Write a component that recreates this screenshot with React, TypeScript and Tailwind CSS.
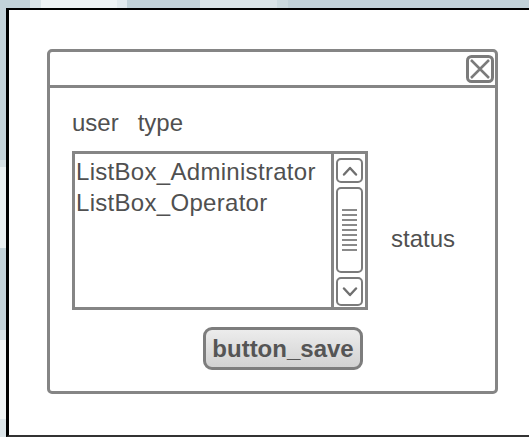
import React from "react"

const font = { fontFamily: '"Liberation Sans", Arial, sans-serif' }

function CloseIcon() {
  return (
    <svg width="28" height="28" viewBox="0 0 28 28" fill="none">
      <rect x="1.5" y="1.5" width="25" height="25" rx="4" stroke="#7b7b7b" strokeWidth="3" />
      <path d="M5 5 L23 23 M23 5 L5 23" stroke="#7b7b7b" strokeWidth="2.5" />
    </svg>
  )
}

function Chevron({ up }: { up?: boolean }) {
  return (
    <svg width="16" height="10" viewBox="0 0 16 10" fill="none">
      <path
        d={up ? "M2 8.5 L8 2 L14 8.5" : "M2 1.5 L8 8 L14 1.5"}
        stroke="#6f6f6f"
        strokeWidth="2.4"
        strokeLinejoin="round"
        strokeLinecap="round"
      />
    </svg>
  )
}

function ScrollBar() {
  return (
    <div className="flex w-[34px] flex-col gap-[4px] border-l-[3px] border-[#858585] px-[2px] pt-[4px] pb-[1px]">
      <div className="flex h-[25px] items-center justify-center rounded-[5px] border-[2.5px] border-[#7b7b7b]">
        <Chevron up />
      </div>
      <div className="flex flex-1 flex-col items-center justify-center gap-[3px] rounded-[5px] border-[2.5px] border-[#7b7b7b]">
        {[0, 1, 2, 3, 4, 5, 6, 7, 8].map((i) => (
          <div key={i} className="h-[2px] w-[15px] bg-[#8a8a8a]" />
        ))}
      </div>
      <div className="flex h-[29px] items-center justify-center rounded-[5px] border-[2.5px] border-[#7b7b7b]">
        <Chevron />
      </div>
    </div>
  )
}

export default function App() {
  return (
    <div className="flex h-[437px] w-[529px] flex-col overflow-hidden bg-[#c4d3da]" style={font}>
      {/* desktop strip above the frame */}
      <div className="flex h-[8px] shrink-0">
        <div className="w-[30px] bg-[#c2d2d9]" />
        <div className="w-[11px] bg-[#dae4e8]" />
        <div className="w-[76px] bg-[#eef3f5]" />
        <div className="w-[10px] bg-[#e2eaee]" />
        <div className="w-[73px] bg-[#c2d2d9]" />
        <div className="w-[77px] bg-[#d9e3e7]" />
        <div className="w-[11px] bg-[#ccdadf]" />
        <div className="flex-1 bg-[#c2d2d9]" />
      </div>

      <div className="flex flex-1">
        <div className="flex w-[6px] shrink-0 flex-col">
          <div className="h-[152px] bg-[#c4d3da]" />
          <div className="h-[7px] bg-[#d5dfe4]" />
          <div className="h-[81px] bg-[#eaf0f2]" />
          <div className="h-[82px] bg-[#c4d3da]" />
          <div className="h-[10px] bg-[#d8e2e6]" />
          <div className="h-[79px] bg-[#f0f4f5]" />
          <div className="flex-1 bg-[#dce5e9]" />
        </div>

        {/* outer frame */}
        <div className="flex-1 border-t-[2px] border-b-[2px] border-l-[3px] border-t-black border-b-[#333] border-l-black bg-white pt-[39px] pl-[38px]">
          <div className="flex h-[345px] w-[451px] flex-col rounded-[5px] border-[3px] border-[#858585]">
            {/* title bar */}
            <div className="flex h-[36px] items-center justify-end border-b-[3px] border-[#858585] pr-[1px]">
              <CloseIcon />
            </div>

            {/* dialog body */}
            <div className="flex flex-1 flex-col pt-[21px] pl-[22px] text-[#505050]">
              <div className="text-[24px] leading-[28px]">
                user<span className="ml-[19px]">type</span>
              </div>

              <div className="mt-[14px] flex items-start">
                <div className="flex h-[159px] w-[296px] border-[3px] border-[#858585]">
                  <div className="flex-1 pt-[2px] pl-[1px] text-[24px] leading-[31px] tracking-[0.3px]">
                    <div>ListBox_Administrator</div>
                    <div>ListBox_Operator</div>
                  </div>
                  <ScrollBar />
                </div>
                <div className="mt-[74px] ml-[23px] text-[24px] leading-[28px]">status</div>
              </div>

              <button className="mt-[17px] ml-[131px] flex h-[43px] w-[160px] items-center justify-center rounded-[9px] border-[3px] border-[#7d7d7d] bg-gradient-to-b from-[#ececec] to-[#d2d2d2] text-[24px] font-bold text-[#555]">
                button_save
              </button>
            </div>
          </div>
        </div>
      </div>
    </div>
  )
}
